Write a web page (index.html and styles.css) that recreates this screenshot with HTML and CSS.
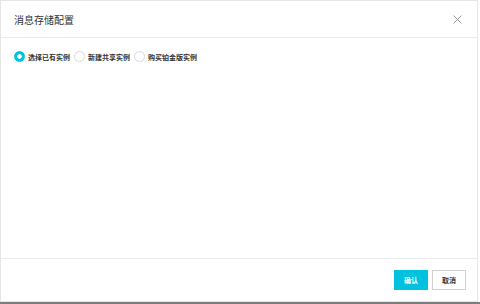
FILE: index.html
```html
<!DOCTYPE html>
<html lang="zh-CN">
<head>
    <meta charset="UTF-8">
    <title>消息存储配置</title>
    <link rel="stylesheet" href="styles.css">
</head>
<body>
    <div class="dialog">
        <div class="dialog-header">
            <span class="dialog-title">消息存储配置</span>
            <span class="dialog-close">
                <svg width="9" height="9" viewBox="0 0 9 9">
                    <path d="M0.5 0.5L8.5 8.5M8.5 0.5L0.5 8.5" stroke="#9a9a9a" stroke-width="1" fill="none"/>
                </svg>
            </span>
        </div>
        <div class="dialog-body">
            <div class="radio-group">
                <label class="radio checked"><span class="radio-dot"></span>选择已有实例</label>
                <label class="radio"><span class="radio-dot"></span>新建共享实例</label>
                <label class="radio"><span class="radio-dot"></span>购买铂金版实例</label>
            </div>
        </div>
        <div class="dialog-footer">
            <button class="btn btn-primary">确认</button>
            <button class="btn">取消</button>
        </div>
    </div>
    <div class="backdrop-edge"></div>
</body>
</html>
```

FILE: styles.css
```css
/* page */
body {
    margin: 0;
    width: 480px;
    height: 304px;
    background: #fff;
    font-family: "Noto Sans CJK SC", "Liberation Sans", sans-serif;
    color: #333;
    overflow: hidden;
}

/* dialog box */
.dialog {
    width: 476px;
    height: 300px;
    border: 1px solid #e6e6e6;
    display: flex;
    flex-direction: column;
    background: #fff;
}

.dialog-header {
    height: 36px;
    border-bottom: 1px solid #ebebeb;
    display: flex;
    align-items: center;
    justify-content: space-between;
    padding: 0 15px 0 13px;
}

.dialog-title {
    font-size: 10px;
    color: #333;
}

.dialog-close {
    display: flex;
    align-items: center;
}

.dialog-body {
    flex: 1;
    padding: 13px 13px 0 13px;
}

/* radios */
.radio-group {
    display: flex;
    align-items: center;
    gap: 4px;
}

.radio {
    display: flex;
    align-items: center;
    font-size: 7px;
    font-weight: bold;
    color: #333;
}

.radio-dot {
    width: 9px;
    height: 9px;
    border: 1px solid #d9d9d9;
    border-radius: 50%;
    margin-right: 3px;
    background: #fff;
}

.radio.checked .radio-dot {
    border-color: #00c1de;
    background: radial-gradient(circle, #fff 0 2px, #00c1de 2.5px);
}

/* footer buttons */
.dialog-footer {
    height: 42px;
    border-top: 1px solid #ebebeb;
    display: flex;
    align-items: center;
    justify-content: flex-end;
    gap: 4px;
    padding-right: 11px;
}

.btn {
    height: 20px;
    width: 34px;
    padding: 0;
    font-family: inherit;
    font-size: 7px;
    font-weight: bold;
    color: #333;
    background: #fff;
    border: 1px solid #d0d0d0;
}

.btn-primary {
    background: #00c1de;
    border-color: #00c1de;
    color: #fff;
}

.backdrop-edge {
    height: 3px;
    background: #7d7d7d;
}
```
